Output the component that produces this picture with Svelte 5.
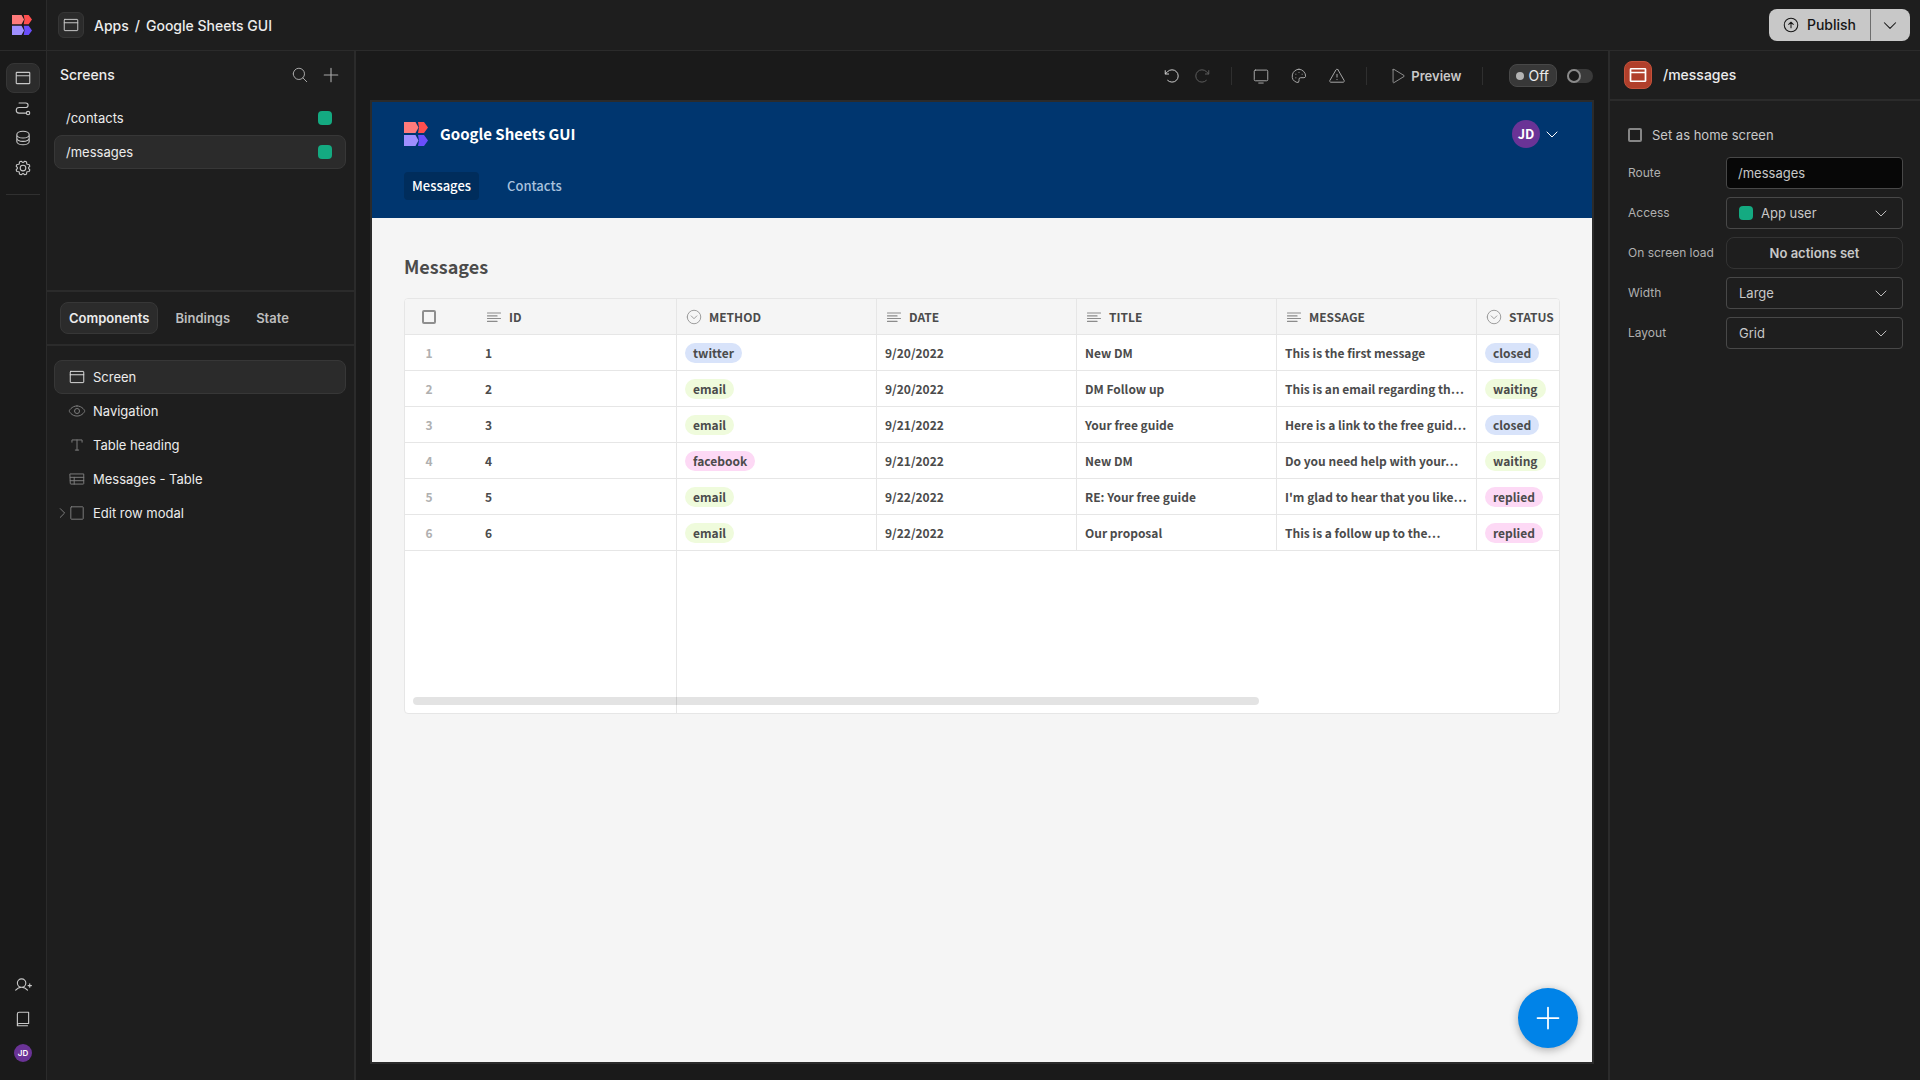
<script>
  const icons = {
    browser: "M40,48H216a8,8,0,0,1,8,8V200a8,8,0,0,1-8,8H40a8,8,0,0,1-8-8V56a8,8,0,0,1,8-8ZM32,96H224",
    path: "M72,56h96a32,32,0,0,1,0,64H72a40,40,0,0,0,0,80H176M176,200a24,24,0,1,0,48,0a24,24,0,1,0-48,0",
    database: "M40,80a88,48,0,1,0,176,0a88,48,0,1,0-176,0M40,80v48c0,26.5,39.4,48,88,48s88-21.5,88-48V80M40,128v48c0,26.5,39.4,48,88,48s88-21.5,88-48V128",
    gear: "M88,128a40,40,0,1,0,80,0a40,40,0,1,0-80,0M41.43,178.09A99.14,99.14,0,0,1,31.36,153.8l16.78-21a81.59,81.59,0,0,1,0-9.64l-16.77-21a99.43,99.43,0,0,1,10.05-24.3l26.71-3a81,81,0,0,1,6.81-6.81l3-26.7A99.14,99.14,0,0,1,102.2,31.36l21,16.78a81.59,81.59,0,0,1,9.64,0l21-16.77a99.43,99.43,0,0,1,24.3,10.05l3,26.71a81,81,0,0,1,6.81,6.81l26.7,3a99.14,99.14,0,0,1,10.07,24.29l-16.78,21a81.59,81.59,0,0,1,0,9.64l16.77,21a99.43,99.43,0,0,1-10,24.3l-26.71,3a81,81,0,0,1-6.81,6.81l-3,26.7a99.14,99.14,0,0,1-24.29,10.07l-21-16.78a81.59,81.59,0,0,1-9.64,0l-21,16.77a99.43,99.43,0,0,1-24.3-10l-3-26.71a81,81,0,0,1-6.81-6.81Z",
    userPlus: "M48,100a60,60,0,1,0,120,0a60,60,0,1,0-120,0M24,200c20.55-24.45,49.56-40,84-40s63.45,15.55,84,40M200,136h48M224,112v48",
    book: "M48,216a24,24,0,0,1,24-24H208V32H72A24,24,0,0,0,48,56ZM48,216v8H192",
    search: "M32,112a80,80,0,1,0,160,0a80,80,0,1,0-160,0M168.57,168.57L224,224",
    plus: "M32,128H224M128,32V224",
    eye: "M128,56C48,56,16,128,16,128s32,72,112,72,112-72,112-72S208,56,128,56ZM92,128a36,36,0,1,0,72,0a36,36,0,1,0-72,0",
    text: "M56,88V56H200V88M128,56V200M104,200h48",
    table: "M32,56H224V192a8,8,0,0,1-8,8H40a8,8,0,0,1-8-8ZM32,104H224M32,152H224M88,104v96",
    square: "M48,40H208a8,8,0,0,1,8,8V208a8,8,0,0,1-8,8H48a8,8,0,0,1-8-8V48a8,8,0,0,1,8-8Z",
    caretRight: "M96,48l80,80L96,208",
    caretDown: "M208,96l-80,80L48,96",
    undo: "M79.8,99.7h-48v-48M65.8,190.2a88,88,0,1,0,0-124.4L31.8,99.7",
    redo: "M176.2,99.7h48v-48M190.2,190.2a88,88,0,1,1,0-124.4l34,33.9",
    monitor: "M48,44H208a16,16,0,0,1,16,16V180a16,16,0,0,1-16,16H48a16,16,0,0,1-16-16V60a16,16,0,0,1,16-16ZM96,228h64",
    palette: "M128,32A96,96,0,0,0,96.3,218.6,24,24,0,0,0,128,196v-20a24,24,0,0,1,24-24h46.2a24,24,0,0,0,23.4-18.7A96,96,0,0,0,128,32ZM128,76v1M83,102v1M83,154v1M173,102v1",
    warning: "M142.41,40.22l87.46,151.87C236,202.79,228.08,216,215.46,216H40.54C27.92,216,20,202.79,26.13,192.09L113.59,40.22C119.89,29.26,136.11,29.26,142.41,40.22ZM128,144V104M128,178v2",
    play: "M72,39.88V216.12a8,8,0,0,0,12.15,6.69l144.08-88.12a7.82,7.82,0,0,0,0-13.38L84.15,33.19A8,8,0,0,0,72,39.88Z",
    arrowUp: "M32,128a96,96,0,1,0,192,0a96,96,0,1,0-192,0M96,120l32-32l32,32M128,168V88",
    options: "M32,128a96,96,0,1,0,192,0a96,96,0,1,0-192,0M88,112l40,40l40-40",
    lines: "M8,56H248M8,108H184M8,156H248M8,208H184"
  };

  const railItems = [
    { icon: "browser", label: "Design" },
    { icon: "path", label: "Automations" },
    { icon: "database", label: "Data" },
    { icon: "gear", label: "Settings" }
  ];

  const components = [
    { icon: "browser", name: "Screen" },
    { icon: "eye", name: "Navigation" },
    { icon: "text", name: "Table heading" },
    { icon: "table", name: "Messages - Table" },
    { icon: "square", name: "Edit row modal", nested: true }
  ];

  const columns = [
    { name: "ID", icon: "lines" },
    { name: "METHOD", icon: "options" },
    { name: "DATE", icon: "lines" },
    { name: "TITLE", icon: "lines" },
    { name: "MESSAGE", icon: "lines" },
    { name: "STATUS", icon: "options" }
  ];

  const rows = [
    { id: 1, method: "twitter", date: "9/20/2022", title: "New DM", message: "This is the first message", status: "closed" },
    { id: 2, method: "email", date: "9/20/2022", title: "DM Follow up", message: "This is an email regarding th…", status: "waiting" },
    { id: 3, method: "email", date: "9/21/2022", title: "Your free guide", message: "Here is a link to the free guid…", status: "closed" },
    { id: 4, method: "facebook", date: "9/21/2022", title: "New DM", message: "Do you need help with your…", status: "waiting" },
    { id: 5, method: "email", date: "9/22/2022", title: "RE: Your free guide", message: "I'm glad to hear that you like…", status: "replied" },
    { id: 6, method: "email", date: "9/22/2022", title: "Our proposal", message: "This is a follow up to the…", status: "replied" }
  ];

  const badgeColors = {
    twitter: "blue",
    closed: "blue",
    email: "green",
    waiting: "green",
    facebook: "pink",
    replied: "pink"
  };

  const tabs = ["Components", "Bindings", "State"];
  const screens = ["/contacts", "/messages"];

  let activeScreen = $state("/messages");
  let activeTab = $state("Components");
  let activeComponent = $state("Screen");
  let route = $state("/messages");
</script>

{#snippet icon(name, size = 18, weight = 14)}
  <svg class="icon" width={size} height={size} viewBox="0 0 256 256" stroke-width={weight} aria-hidden="true">
    <path d={icons[name]} />
  </svg>
{/snippet}

{#snippet logo(size)}
  <svg width={size} height={size} viewBox="0 0 24 24" aria-hidden="true">
    <path fill="#ff7b7b" d="M0 0h11.5l3 5.5-3 5.5H0z" />
    <path fill="#ff4e4e" d="M14 0h6l4 5.5-4 5.5h-6l1-5.500z" />
    <path fill="#9f8fff" d="M0 13h11.5l3 5.5-3 5.5H0z" />
    <path fill="#6a4efc" d="M14 13h6l4 5.5-4 5.5h-6l1-5.500z" />
  </svg>
{/snippet}

<div class="app">
  <nav class="rail">
    <a class="rail-logo" href="#home" aria-label="Home">{@render logo(20)}</a>
    <div class="rail-items">
      {#each railItems as item, i}
        <button class="rail-btn" class:active={i === 0} aria-label={item.label}>{@render icon(item.icon, 18, 16)}</button>
      {/each}
    </div>
    <div class="rail-bottom">
      <button class="plain" aria-label="Invite user">{@render icon("userPlus", 18, 16)}</button>
      <button class="plain" aria-label="Docs">{@render icon("book", 18, 16)}</button>
      <button class="avatar small" aria-label="Account">JD</button>
    </div>
  </nav>

  <div class="main">
    <header class="topbar">
      <button class="app-icon" aria-label="App">{@render icon("browser", 18, 14)}</button>
      <div class="crumbs">
        <a href="#apps">Apps</a>
        <span>/</span>
        <span>Google Sheets GUI</span>
      </div>
      <div class="publish">
        <button class="publish-main">{@render icon("arrowUp", 18, 15)}Publish</button>
        <button class="publish-more" aria-label="More">{@render icon("caretDown", 18, 15)}</button>
      </div>
    </header>

    <div class="workspace">
      <aside class="left">
        <section class="screens">
          <div class="panel-head">
            <span>Screens</span>
            <button class="plain" aria-label="Search">{@render icon("search")}</button>
            <button class="plain" aria-label="Add screen">{@render icon("plus", 18, 16)}</button>
          </div>
          {#each screens as screen}
            <button class="item screen" class:active={activeScreen === screen} onclick={() => (activeScreen = screen)}>
              <span>{screen}</span>
              <span class="swatch"></span>
            </button>
          {/each}
        </section>
        <div class="tabs">
          {#each tabs as tab}
            <button class="tab" class:active={activeTab === tab} onclick={() => (activeTab = tab)}>{tab}</button>
          {/each}
        </div>
        <section class="tree">
          {#each components as c}
            <button class="item" class:active={activeComponent === c.name} onclick={() => (activeComponent = c.name)}>
              <span class="caret">{#if c.nested}{@render icon("caretRight", 14, 18)}{/if}</span>
              {@render icon(c.icon)}
              <span>{c.name}</span>
            </button>
          {/each}
        </section>
      </aside>

      <main class="canvas">
        <div class="toolbar">
          <button class="plain bright" aria-label="Undo">{@render icon("undo")}</button>
          <button class="plain dim" aria-label="Redo">{@render icon("redo")}</button>
          <span class="sep"></span>
          <div class="tools">
            <button class="plain" aria-label="Device">{@render icon("monitor")}</button>
            <button class="plain" aria-label="Theme">{@render icon("palette")}</button>
            <button class="plain" aria-label="Errors">{@render icon("warning")}</button>
          </div>
          <span class="sep"></span>
          <button class="preview-btn">{@render icon("play", 18, 12)}Preview</button>
          <span class="sep"></span>
          <span class="off"><i></i>Off</span>
          <input class="switch" type="checkbox" aria-label="Live data" />
        </div>

        <div class="frame">
          <header class="site-head">
            <div class="site-title">
              {@render logo(24)}
              <span class="site-name">Google Sheets GUI</span>
              <button class="user-menu" aria-label="User menu">
                <span class="avatar">JD</span>
                {@render icon("caretDown", 16, 16)}
              </button>
            </div>
            <nav class="site-nav">
              <a class="current" href="#messages">Messages</a>
              <a href="#contacts">Contacts</a>
            </nav>
          </header>
          <div class="site-body">
            <h1>Messages</h1>
            <div class="grid">
              <table>
                <colgroup>
                  <col class="gutter" />
                  {#each columns as c}<col class="data" />{/each}
                </colgroup>
                <thead>
                  <tr>
                    <th class="select"><input class="box" type="checkbox" aria-label="Select all rows" /></th>
                    {#each columns as c}
                      <th><span class="col-head">{@render icon(c.icon, c.icon === "lines" ? 14 : 18, c.icon === "lines" ? 20 : 12)}{c.name}</span></th>
                    {/each}
                  </tr>
                </thead>
                <tbody>
                  {#each rows as row}
                    <tr>
                      <td class="select">{row.id}</td>
                      <td>{row.id}</td>
                      <td><span class="badge {badgeColors[row.method]}">{row.method}</span></td>
                      <td>{row.date}</td>
                      <td>{row.title}</td>
                      <td>{row.message}</td>
                      <td><span class="badge {badgeColors[row.status]}">{row.status}</span></td>
                    </tr>
                  {/each}
                </tbody>
              </table>
              <div class="grid-rest"></div>
              <div class="scrollbar"></div>
            </div>
          </div>
          <button class="fab" aria-label="Add component">{@render icon("plus", 28, 16)}</button>
        </div>
      </main>

      <aside class="right">
        <div class="settings-head">
          <span class="type-icon">{@render icon("browser", 20, 22)}</span>
          <span>/messages</span>
        </div>
        <form class="settings">
          <label class="home"><input class="box" type="checkbox" />Set as home screen</label>
          <div class="field">
            <label for="route">Route</label>
            <input id="route" class="control" type="text" bind:value={route} />
          </div>
          <div class="field">
            <label for="access">Access</label>
            <div class="control">
              <span class="swatch"></span>
              <select id="access"><option>App user</option></select>
              {@render icon("caretDown", 16, 15)}
            </div>
          </div>
          <div class="field">
            <label for="load">On screen load</label>
            <button id="load" type="button" class="control actions">No actions set</button>
          </div>
          <div class="field">
            <label for="width">Width</label>
            <div class="control">
              <select id="width"><option>Large</option></select>
              {@render icon("caretDown", 16, 15)}
            </div>
          </div>
          <div class="field">
            <label for="layout">Layout</label>
            <div class="control">
              <select id="layout"><option>Grid</option></select>
              {@render icon("caretDown", 16, 15)}
            </div>
          </div>
        </form>
      </aside>
    </div>
  </div>
</div>

<style>
  :global(body) {
    margin: 0;
    background: #1a1a1a;
  }

  .app,
  .app * {
    box-sizing: border-box;
  }

  .app {
    display: flex;
    height: 100vh;
    font-family: Inter, sans-serif;
    font-size: 13px;
    line-height: 20px;
    color: #ececec;
  }

  button,
  input,
  select {
    font: inherit;
    color: inherit;
    margin: 0;
  }

  button {
    display: flex;
    align-items: center;
    padding: 0;
    border: 1px solid transparent;
    background: none;
    cursor: pointer;
  }

  a {
    color: inherit;
    text-decoration: none;
  }

  svg {
    display: block;
    flex-shrink: 0;
  }

  .icon {
    fill: none;
    stroke: currentColor;
    stroke-linecap: round;
    stroke-linejoin: round;
  }

  .plain {
    border: none;
    color: #a8a8a8;
  }

  .bright {
    color: #d0d0d0;
  }

  .dim {
    color: #5c5c5c;
  }

  .swatch {
    width: 14px;
    height: 14px;
    border-radius: 4px;
    background: #14aa81;
    flex-shrink: 0;
  }

  .avatar {
    display: flex;
    align-items: center;
    justify-content: center;
    width: 28px;
    height: 28px;
    border-radius: 50%;
    background: #6a3396;
    color: #fff;
    font-weight: 700;
  }

  .avatar.small {
    width: 18px;
    height: 18px;
    font-size: 8px;
    font-weight: 600;
  }

  /* rail */
  .rail {
    display: flex;
    flex-direction: column;
    align-items: center;
    width: 47px;
    flex-shrink: 0;
    border-right: 1px solid #2b2b2b;
    color: #c8c8c8;
  }

  .rail-logo {
    display: flex;
    align-items: center;
    justify-content: center;
    align-self: stretch;
    height: 51px;
    padding-right: 2px;
    border-bottom: 1px solid #2b2b2b;
  }

  .rail-items {
    padding: 12px 0 11px;
    border-bottom: 1px solid #303030;
  }

  .rail-btn {
    justify-content: center;
    width: 34px;
    height: 30px;
    border-radius: 8px;
  }

  .rail-btn.active {
    background: #2b2b2b;
    border-color: #363636;
  }

  .rail-bottom {
    display: flex;
    flex-direction: column;
    align-items: center;
    gap: 16px;
    margin-top: auto;
    padding-bottom: 18px;
  }

  .rail-bottom .plain {
    color: #c8c8c8;
  }

  /* top bar */
  .main {
    display: flex;
    flex-direction: column;
    flex: 1;
    min-width: 0;
  }

  .topbar {
    display: flex;
    align-items: center;
    height: 51px;
    flex-shrink: 0;
    padding: 0 10px 0 11px;
    background: #1e1e1e;
    border-bottom: 1px solid #2b2b2b;
    font-size: 14px;
  }

  .app-icon {
    justify-content: center;
    width: 26px;
    height: 26px;
    border-radius: 6px;
    background: #2b2b2b;
    border-color: #363636;
    color: #c8c8c8;
  }

  .crumbs {
    display: flex;
    gap: 6px;
    margin-left: 10px;
    padding-top: 1px;
    font-weight: 500;
  }

  .publish {
    display: flex;
    margin-left: auto;
    height: 32px;
    border-radius: 8px;
    background: #c8c8c8;
    color: #161616;
  }

  .publish-main {
    gap: 7px;
    padding: 0 13px 0 12px;
    font-weight: 500;
  }

  .publish-more {
    justify-content: center;
    width: 40px;
    border-left: 1px solid #6e6e6e;
  }

  .workspace {
    display: flex;
    flex: 1;
    min-height: 0;
  }

  /* left panel */
  .left {
    width: 309px;
    flex-shrink: 0;
    background: #1e1e1e;
    border-right: 2px solid #2b2b2b;
  }

  .screens {
    height: 241px;
    padding: 0 8px 0 7px;
    border-bottom: 2px solid #2b2b2b;
  }

  .panel-head {
    display: flex;
    align-items: center;
    gap: 13px;
    height: 50px;
    padding: 0 6px 2px;
    font-size: 14px;
    font-weight: 500;
  }

  .panel-head span {
    flex: 1;
  }

  .item {
    gap: 7px;
    width: 100%;
    height: 34px;
    border-radius: 8px;
    text-align: left;
    font-weight: 400;
  }

  .item.active {
    background: #2b2b2b;
    border-color: #373737;
  }

  .item.screen {
    justify-content: space-between;
    padding: 0 13px 0 11px;
  }

  .item .icon {
    color: #7c7c7c;
  }

  .item.active .icon {
    color: #dcdcdc;
  }

  .caret {
    width: 14px;
    margin-right: -8px;
  }

  .tabs {
    display: flex;
    gap: 8px;
    padding: 10px 13px;
    border-bottom: 2px solid #2b2b2b;
  }

  .tab {
    height: 32px;
    padding: 0 8px 1px;
    border-radius: 8px;
    color: #bdbdbd;
    font-weight: 600;
  }

  .tab.active {
    background: #2b2b2b;
    border-color: #373737;
    color: #ececec;
  }

  .tree {
    padding: 14px 8px 14px 7px;
  }

  /* canvas */
  .canvas {
    display: flex;
    flex-direction: column;
    flex: 1;
    min-width: 0;
    padding: 0 14px 16px;
  }

  .toolbar {
    display: flex;
    align-items: center;
    justify-content: flex-end;
    height: 49px;
    flex-shrink: 0;
  }

  .dim {
    margin-left: 12px;
  }

  .sep {
    width: 1px;
    height: 18px;
    margin: 0 20px;
    background: #2f2f2f;
  }

  .tools {
    display: flex;
    gap: 20px;
  }

  .preview-btn {
    gap: 5px;
    color: #c8c8c8;
    font-weight: 600;
  }

  .preview-btn .icon {
    color: #a0a0a0;
  }

  .off {
    display: flex;
    align-items: center;
    gap: 4px;
    height: 23px;
    margin: 0 10px 0 6px;
    padding: 0 7px 0 6px;
    border: 1px solid #484848;
    border-radius: 8px;
    background: #383838;
    font-size: 14px;
  }

  .off i {
    width: 8px;
    height: 8px;
    border-radius: 50%;
    background: #b4b4b4;
  }

  .switch {
    appearance: none;
    display: flex;
    width: 26px;
    height: 14px;
    margin-right: 1px;
    border-radius: 7px;
    background: #3a3a3a;
  }

  .switch::before {
    content: "";
    width: 10px;
    height: 10px;
    border: 2px solid #8a8a8a;
    border-radius: 50%;
    background: #1a1a1a;
  }

  .frame {
    position: relative;
    flex: 1;
    min-height: 0;
    overflow: hidden;
    border: 2px solid #2b2b2b;
    background: #f5f5f5;
    color: #4b4b4b;
    font-family: "Noto Sans CJK SC", sans-serif;
    font-weight: 500;
  }

  .site-head {
    padding: 18px 32px;
    background: #00366f;
    color: #fff;
  }

  .site-title {
    display: flex;
    align-items: center;
    height: 28px;
  }

  .site-name {
    margin-left: 12px;
    font-size: 15px;
    font-weight: 700;
  }

  .user-menu {
    gap: 4px;
    margin-left: auto;
    border: none;
  }

  .site-nav {
    display: flex;
    gap: 20px;
    padding-top: 24px;
  }

  .site-nav a {
    padding: 4px 8px;
    border-radius: 4px;
    color: #a9c2de;
  }

  .site-nav a.current {
    background: #002d5c;
    color: #fff;
  }

  .site-body {
    padding: 32px;
  }

  h1 {
    margin: 0 0 16px;
    font-size: 18px;
    line-height: 32px;
    font-weight: 700;
  }

  .grid {
    position: relative;
    display: flex;
    flex-direction: column;
    height: 416px;
    overflow: hidden;
    border: 1px solid #e6e6e6;
    border-radius: 4px;
    background: #fff;
  }

  table {
    width: 1272px;
    table-layout: fixed;
    border-collapse: separate;
    border-spacing: 0;
    font-size: 12px;
  }

  .gutter {
    width: 72px;
  }

  .data {
    width: 200px;
  }

  th,
  td {
    height: 36px;
    padding: 0 8px;
    border-right: 1px solid #e6e6e6;
    border-bottom: 1px solid #e6e6e6;
    font-weight: 700;
    text-align: left;
    white-space: nowrap;
  }

  th {
    background: #f5f5f5;
  }

  .select {
    padding: 0 24px 0 0;
    border-right: none;
    text-align: center;
    color: #b0b0b0;
  }

  th .box {
    display: block;
    margin: 0 auto;
    border-color: #8e8e8e;
  }

  .col-head {
    display: flex;
    align-items: center;
    gap: 6px;
  }

  .col-head .icon {
    box-sizing: content-box;
    color: #8c8c8c;
  }

  .col-head .icon[width="14"] {
    padding: 0 2px;
  }

  .badge {
    display: inline-block;
    padding: 0 8px;
    border-radius: 10px;
    line-height: 20px;
    vertical-align: middle;
  }

  .blue {
    background: #d8e3fa;
  }

  .green {
    background: #effbdc;
  }

  .pink {
    background: #fdd9f5;
  }

  .grid-rest {
    flex: 1;
    width: 272px;
    border-right: 1px solid #e6e6e6;
  }

  .scrollbar {
    position: absolute;
    left: 8px;
    bottom: 8px;
    width: 846px;
    height: 8px;
    border-radius: 4px;
    background: rgba(0, 0, 0, 0.11);
  }

  .fab {
    position: absolute;
    right: 14px;
    bottom: 14px;
    justify-content: center;
    width: 60px;
    height: 60px;
    border: none;
    border-radius: 50%;
    background: #0083e8;
    color: #fff;
    box-shadow: 0 2px 8px rgba(0, 0, 0, 0.3);
  }

  /* right panel */
  .right {
    width: 312px;
    flex-shrink: 0;
    background: #1e1e1e;
    border-left: 2px solid #2b2b2b;
  }

  .settings-head {
    display: flex;
    align-items: center;
    gap: 11px;
    height: 50px;
    padding: 0 14px;
    border-bottom: 2px solid #2b2b2b;
    font-size: 14px;
    font-weight: 500;
  }

  .type-icon {
    display: flex;
    align-items: center;
    justify-content: center;
    width: 28px;
    height: 28px;
    border: 1px solid #c4513a;
    border-radius: 8px;
    background: #b03f2b;
    color: #fff;
  }

  .settings {
    display: flex;
    flex-direction: column;
    gap: 8px;
    padding: 22px 17px 0 18px;
    color: #c8c8c8;
  }

  .home {
    display: flex;
    align-items: center;
    gap: 10px;
    height: 24px;
    margin-bottom: 2px;
  }

  .box {
    appearance: none;
    width: 14px;
    height: 14px;
    border: 2px solid #868686;
    border-radius: 2px;
  }

  .field {
    display: flex;
    align-items: center;
  }

  .field label {
    width: 98px;
    flex-shrink: 0;
    font-size: 12px;
    color: #b0b0b0;
  }

  .control {
    display: flex;
    align-items: center;
    flex: 1;
    min-width: 0;
    height: 32px;
    padding: 0 12px;
    border: 1px solid #484848;
    border-radius: 4px;
  }

  input.control {
    padding: 0 11px;
    background: #070707;
  }

  .control .swatch {
    margin-right: 8px;
  }

  .control .icon {
    margin-right: 1px;
  }

  .control select {
    appearance: none;
    flex: 1;
    min-width: 0;
    padding: 0;
    border: none;
    background: none;
  }

  .actions {
    justify-content: center;
    border-color: #333;
    border-radius: 8px;
    font-weight: 600;
  }
</style>
